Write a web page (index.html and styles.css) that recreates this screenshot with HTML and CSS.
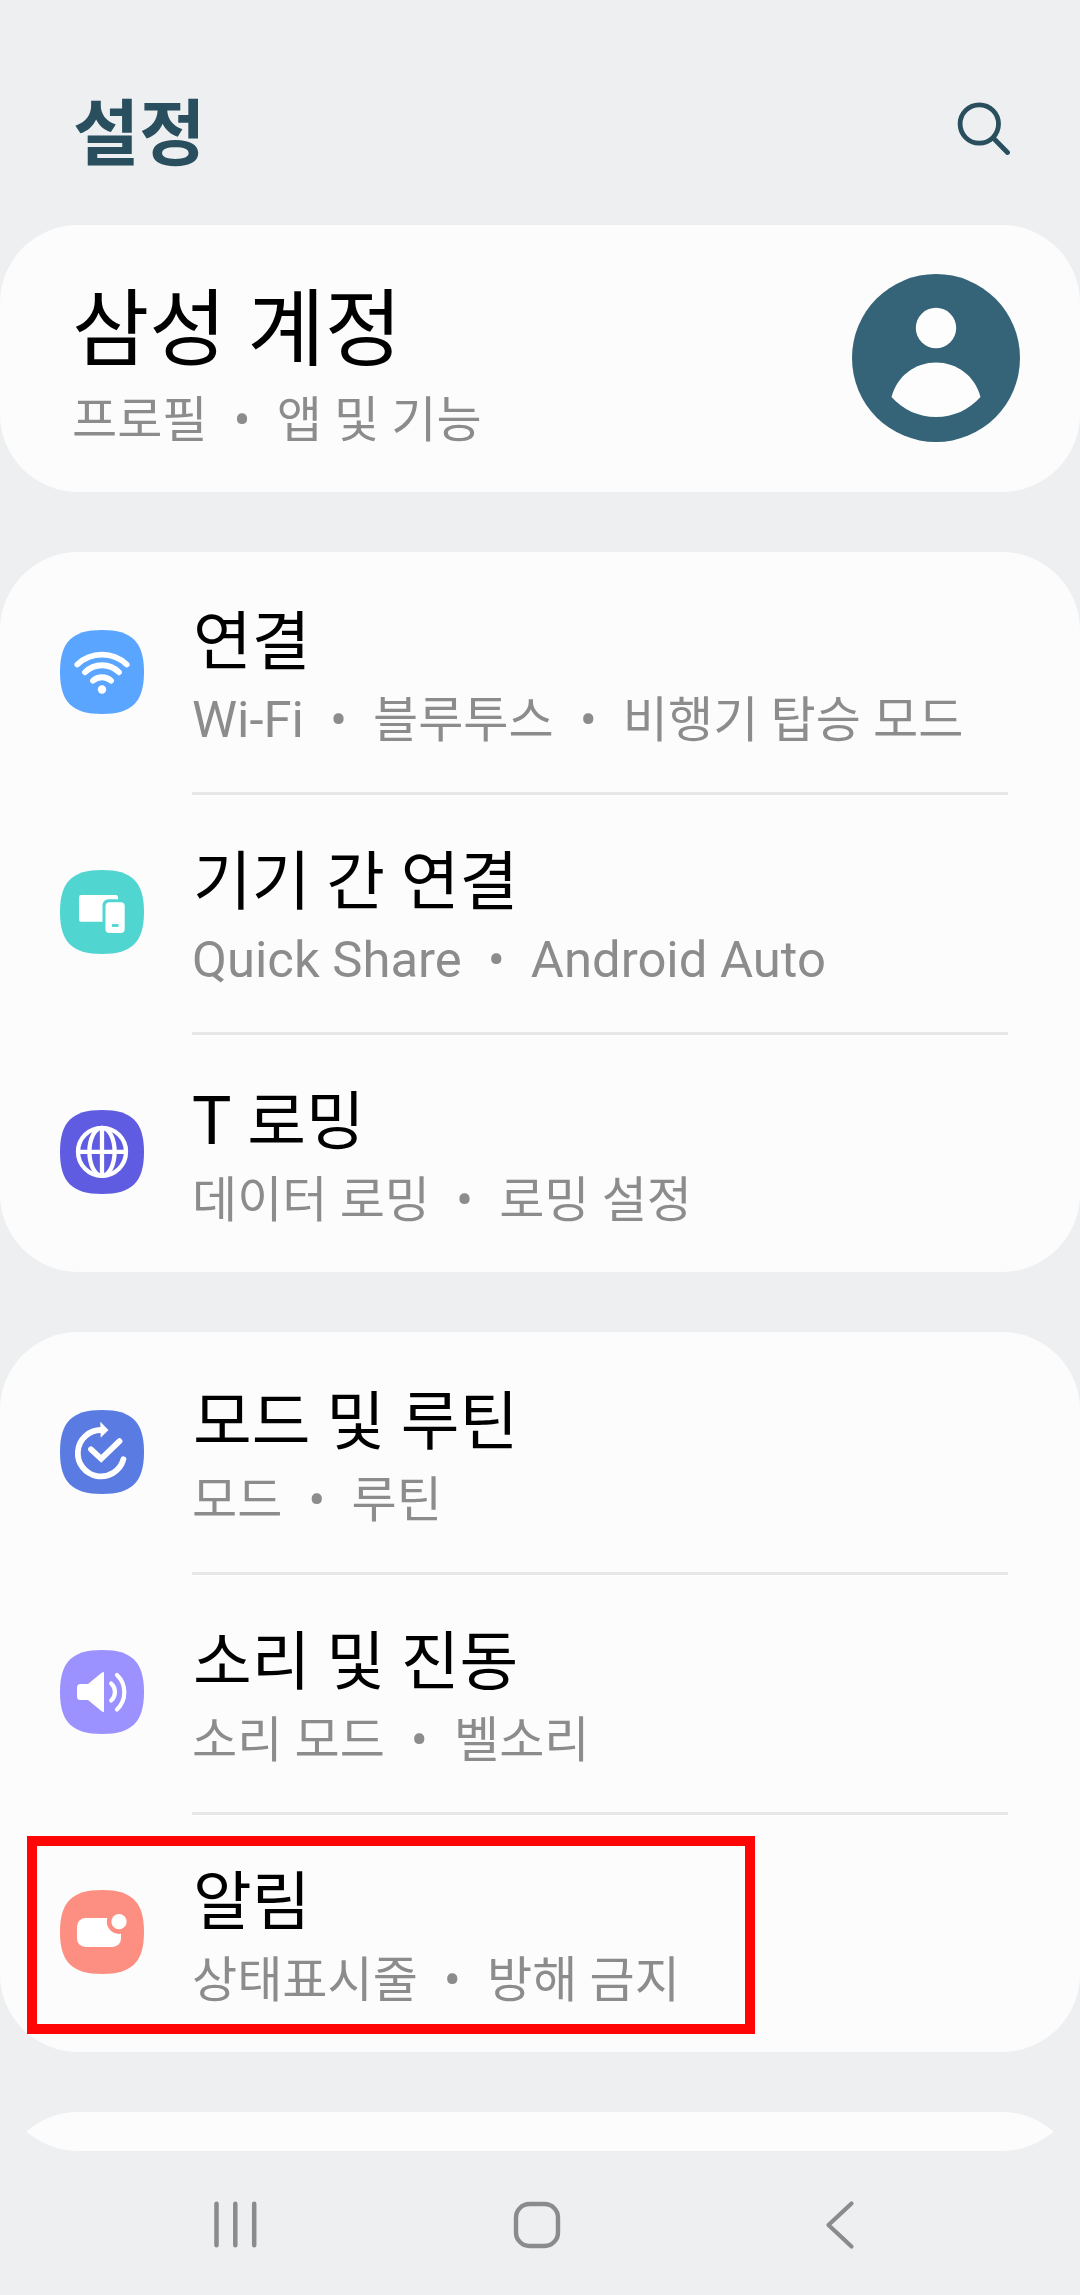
FILE: index.html
```
<!DOCTYPE html>
<html lang="ko">
<head>
<meta charset="utf-8">
<title>설정</title>
<link rel="stylesheet" href="styles.css">
</head>
<body>
<div class="screen">
  <main class="scroll">
    <header class="header">
      <h1 class="header-title">설정</h1>
      <svg class="search" viewBox="0 0 60 60" fill="none" stroke="#294e5e" stroke-linecap="round">
        <circle cx="29.3" cy="28" r="19.2" stroke-width="4.8"/>
        <path d="M43.3 42 57.5 56.5" stroke-width="4.8"/>
      </svg>
    </header>

    <section class="card profile">
      <div>
        <h2 class="profile-name">삼성 계정</h2>
        <p class="sub">프로필<span class="dot">•</span>앱 및 기능</p>
      </div>
      <svg class="avatar" viewBox="0 0 168 168">
        <circle cx="84" cy="84" r="84" fill="#356478"/>
        <circle cx="84" cy="54" r="20.2" fill="#fdfdfd"/>
        <path d="M39.5 123C45 102 63 88.500 84 88.500S123 102 128.500 123C117 136 101 143 84 143S51 136 39.500 123Z" fill="#fdfdfd"/>
      </svg>
    </section>

    <section class="card">
      <div class="row">
        <svg class="icon" viewBox="0 0 84 84">
          <path fill="#5aa5ff" d="M42 0C72 0 84 12 84 42S72 84 42 84 0 72 0 42 12 0 42 0Z"/>
          <g fill="none" stroke="#fff" stroke-width="5.800" stroke-linecap="round">
            <path d="M17.300 34.500A36 36 0 0 1 66.700 34.500"/>
            <path d="M25 42.300A24 24 0 0 1 59 42.300"/>
            <path d="M33 50.700A13.500 13.500 0 0 1 51 50.700"/>
          </g>
          <circle cx="42" cy="59.500" r="4.200" fill="#fff"/>
        </svg>
        <div class="text">
          <h3 class="title">연결</h3>
          <p class="sub"><span class="latin">Wi-Fi</span><span class="dot">•</span>블루투스<span class="dot">•</span>비행기 탑승 모드</p>
        </div>
      </div>
      <div class="row">
        <svg class="icon" viewBox="0 0 84 84">
          <path fill="#50d5d0" d="M42 0C72 0 84 12 84 42S72 84 42 84 0 72 0 42 12 0 42 0Z"/>
          <path d="M21 25H56Q58 25 58 28V51.700H21Q19 51.700 19 49.500V27.200Q19 25 21 25Z" fill="#fff"/>
          <rect x="42.500" y="29.300" width="25" height="36.500" rx="6" fill="#50d5d0"/>
          <rect x="45.500" y="32.300" width="19.200" height="30.700" rx="4" fill="#fff"/>
          <path d="M52 55.500h6.500" stroke="#50d5d0" stroke-width="2.800"/>
        </svg>
        <div class="text">
          <h3 class="title">기기 간 연결</h3>
          <p class="sub"><span class="latin">Quick Share</span><span class="dot">•</span><span class="latin">Android Auto</span></p>
        </div>
      </div>
      <div class="row">
        <svg class="icon" viewBox="0 0 84 84">
          <path fill="#5f5ce1" d="M42 0C72 0 84 12 84 42S72 84 42 84 0 72 0 42 12 0 42 0Z"/>
          <g fill="none" stroke="#fff" stroke-width="4.300">
            <circle cx="42" cy="41.800" r="24"/>
            <ellipse cx="42" cy="41.800" rx="12.600" ry="24"/>
            <path d="M42 18V66M18 41.800H66"/>
          </g>
        </svg>
        <div class="text">
          <h3 class="title"><span class="initial">T</span> 로밍</h3>
          <p class="sub">데이터 로밍<span class="dot">•</span>로밍 설정</p>
        </div>
      </div>
    </section>

    <section class="card">
      <div class="row">
        <svg class="icon" viewBox="0 0 84 84">
          <path fill="#5a7be1" d="M42 0C72 0 84 12 84 42S72 84 42 84 0 72 0 42 12 0 42 0Z"/>
          <g fill="none" stroke="#fff" stroke-width="5.800" stroke-linecap="round" stroke-linejoin="miter">
            <path d="M41 20A23.200 23.200 0 1 0 63.400 49.300"/>
            <path d="M31 39.300 41.200 48.800 59.500 31.200"/>
          </g>
          <path d="M40.300 11.700 48.500 20 40.700 27.700Z" fill="#fff"/>
        </svg>
        <div class="text">
          <h3 class="title">모드 및 루틴</h3>
          <p class="sub">모드<span class="dot">•</span>루틴</p>
        </div>
      </div>
      <div class="row">
        <svg class="icon" viewBox="0 0 84 84">
          <path fill="#9b91ff" d="M42 0C72 0 84 12 84 42S72 84 42 84 0 72 0 42 12 0 42 0Z"/>
          <path d="M20.500 34H28L42 22.600Q44 21 44 23V61Q44 63 42 61.400L28 50H20.500Q17 50 17 46.500V37.500Q17 34 20.500 34Z" fill="#fff"/>
          <g fill="none" stroke="#fff" stroke-width="4.200" stroke-linecap="round">
            <path d="M51.200 33.500A11.500 11.500 0 0 1 51.200 50.500"/>
            <path d="M57 25A24 24 0 0 1 57 59.500"/>
          </g>
        </svg>
        <div class="text">
          <h3 class="title">소리 및 진동</h3>
          <p class="sub">소리 모드<span class="dot">•</span>벨소리</p>
        </div>
      </div>
      <div class="row">
        <svg class="icon" viewBox="0 0 84 84">
          <path fill="#fc8f82" d="M42 0C72 0 84 12 84 42S72 84 42 84 0 72 0 42 12 0 42 0Z"/>
          <rect x="17" y="28" width="44" height="29" rx="8.500" fill="#fff"/>
          <circle cx="59" cy="31.700" r="12.200" fill="#fc8f82"/>
          <circle cx="59" cy="31.700" r="7.600" fill="#fff"/>
        </svg>
        <div class="text">
          <h3 class="title">알림</h3>
          <p class="sub">상태표시줄<span class="dot">•</span>방해 금지</p>
        </div>
        <div class="highlight"></div>
      </div>
    </section>

    <section class="card next"></section>
  </main>

  <nav class="navbar">
    <svg viewBox="0 0 60 60"><path d="M12.500 8.700V50.300M31.300 8.700V50.300M50.200 8.700V50.300" stroke-width="4.500"/></svg>
    <svg viewBox="0 0 60 60"><rect x="9" y="9" width="42" height="42" rx="13.500" stroke-width="4.400"/></svg>
    <svg viewBox="0 0 60 60"><path d="M41.500 8.500 18.500 30 41.500 51.500" stroke-width="4.200"/></svg>
  </nav>
</div>
</body>
</html>
```
FILE: styles.css
```
* {
  box-sizing: border-box;
}

body,
h1,
h2,
h3,
p {
  margin: 0;
  font-weight: 400;
}

body {
  background: #edeff1;
  color: #000;
  font-family: Roboto, "Noto Sans CJK KR", sans-serif;
}

svg {
  display: block;
  flex: none;
}

.screen {
  display: flex;
  flex-direction: column;
  width: 1080px;
  height: 2295px;
  overflow: hidden;
}

.scroll {
  display: flex;
  flex-direction: column;
  gap: 60px;
  height: 2151px;
  overflow: hidden;
  border-radius: 0 0 78px 78px;
}

.header {
  display: flex;
  flex: none;
  justify-content: space-between;
  align-items: flex-start;
  height: 225px;
  margin-bottom: -60px;
  padding: 83px 70px 0 73px;
}

.header-title {
  padding-top: 2px;
  color: #294e5e;
  font-size: 72px;
  font-weight: 700;
  line-height: 100px;
}

.search {
  width: 60px;
  height: 60px;
  margin-top: 13px;
}

.card {
  flex: none;
  background: #fcfcfd;
  border-radius: 78px;
}

.profile {
  display: flex;
  justify-content: space-between;
  height: 267px;
  padding: 54px 60px 0 72px;
}

.profile-name {
  padding-top: 2px;
  margin-bottom: 9px;
  font-size: 84px;
  line-height: 100px;
}

.avatar {
  width: 168px;
  height: 168px;
  margin-top: -5px;
}

.row {
  position: relative;
  display: flex;
  gap: 48px;
  height: 240px;
  padding: 0 72px 0 60px;
}

.icon {
  align-self: center;
  width: 84px;
  height: 84px;
}

.text {
  flex: 1;
  padding-top: 51px;
  white-space: nowrap;
}

.row:not(:last-child) .text {
  margin-bottom: -3px;
  border-bottom: 3px solid #e6e7e7;
}

.title {
  margin-bottom: 7px;
  padding-left: 1px;
  font-size: 63.8px;
  line-height: 80px;
}

.initial {
  margin-left: -1px;
  font-size: 66px;
  line-height: 1;
}

.sub {
  color: #8c8c8c;
  font-size: 49.1px;
  line-height: 60px;
}

.latin,
.dot {
  font-size: 50.8px;
  line-height: 1;
}

.dot {
  padding: 0 26px;
}

.highlight {
  position: absolute;
  top: 24px;
  left: 27px;
  width: 728px;
  height: 198px;
  border: 10px solid #fe0606;
}

.next {
  height: 240px;
}

.navbar {
  display: flex;
  flex: 1;
  justify-content: space-between;
  align-items: center;
  padding: 4px 210px 0 204px;
}

.navbar svg {
  width: 60px;
  height: 60px;
  fill: none;
  stroke: #8b8b8b;
  stroke-linecap: round;
  stroke-linejoin: round;
}
```
